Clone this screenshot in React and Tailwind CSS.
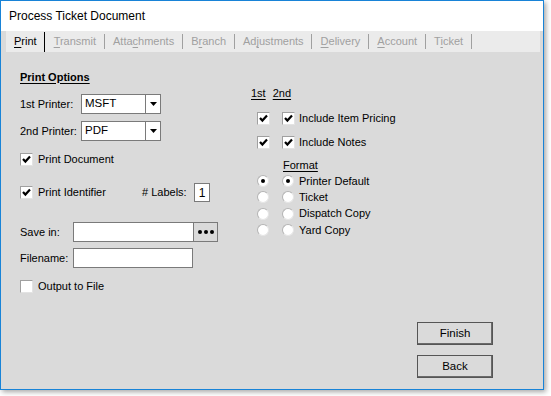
const TABS = [
  { label: 'Print', key: 'P', active: true },
  { label: 'Transmit', key: 'T' },
  { label: 'Attachments', key: 'c', idx: 4 },
  { label: 'Branch', key: 'r', idx: 1 },
  { label: 'Adjustments', key: 'j', idx: 2 },
  { label: 'Delivery', key: 'D' },
  { label: 'Account', key: 'A' },
  { label: 'Ticket', key: 'i', idx: 1 },
]

const Mnemonic = ({ text, idx = 0 }) => (
  <span>
    {text.slice(0, idx)}
    <span className="underline underline-offset-2">{text[idx]}</span>
    {text.slice(idx + 1)}
  </span>
)

const Check = ({ checked }) => (
  <div className="w-[13px] h-[13px] bg-white border-t border-l border-[#a0a0a0] border-r border-b border-r-[#e3e3e3] border-b-[#e3e3e3] flex items-center justify-center shrink-0">
    {checked && (
      <svg width="9" height="9" viewBox="0 0 9 9">
        <path d="M1 4 L3.4 6.6 L8 1.6" fill="none" stroke="#000" strokeWidth="2.2" />
      </svg>
    )}
  </div>
)

const Radio = ({ checked }) => (
  <div className="w-[12px] h-[12px] rounded-full bg-white border border-[#b4b4b4] border-r-[#e6e6e6] border-b-[#e6e6e6] flex items-center justify-center shrink-0">
    {checked && <div className="w-[4px] h-[4px] rounded-full bg-black" />}
  </div>
)

const Combo = ({ value }) => (
  <div className="w-[80px] h-[20px] bg-white border border-[#7a7a7a] flex">
    <div className="flex-1 pl-[3px] flex items-center text-[11.5px] text-black">{value}</div>
    <div className="w-[15px] border-l border-[#7a7a7a] flex items-center justify-center">
      <svg width="7" height="4" viewBox="0 0 7 4"><path d="M0 0 H7 L3.5 4 Z" fill="#000" /></svg>
    </div>
  </div>
)

const Button = ({ children }) => (
  <div className="w-[76px] h-[23px] border border-[#555] shadow-[inset_-1px_-1px_0_#6a6a6a] flex items-center justify-center text-[11.5px] text-black">
    {children}
  </div>
)

export default function App() {
  return (
    <div className="w-[551px] h-[396px] bg-white font-['Liberation_Sans',Arial,sans-serif] text-[11px] text-black leading-none">
      <div className="w-[544px] h-[390px] border border-[#1883d7] bg-[#dadada] flex flex-col shadow-[2px_2px_5px_rgba(0,0,0,0.35)]">
        {/* Title bar */}
        <div className="h-[30px] bg-white flex items-center pl-[8px] text-[12px] text-black">
          Process Ticket Document
        </div>

        {/* Tabs */}
        <div className="h-[21px] ml-[5px] mr-[3px] bg-[#ebebeb] flex items-center pl-[8px]">
          {TABS.map((t) => (
            <div key={t.label} className="flex items-center">
              <span className={t.active ? 'text-black' : 'text-[#a0a0a0]'}>
                <Mnemonic text={t.label} idx={t.idx || 0} />
              </span>
              <div className={t.active ? 'w-px h-[20px] bg-black ml-[7.5px] mr-[8.5px]' : 'w-px h-[15px] bg-[#a0a0a0] ml-[7.5px] mr-[8.5px]'} />
            </div>
          ))}
        </div>

        {/* Body */}
        <div className="flex-1 flex pl-[19px] pb-[11px]">
          {/* Left column */}
          <div className="w-[231px] flex flex-col pt-[18px]">
            <div className="h-[14px] flex items-center font-bold underline underline-offset-2">Print Options</div>

            <div className="mt-[10px] h-[20px] flex items-center">
              <span className="w-[61px]">1st Printer:</span>
              <Combo value="MSFT" />
            </div>
            <div className="mt-[7px] h-[20px] flex items-center">
              <span className="w-[61px]">2nd Printer:</span>
              <Combo value="PDF" />
            </div>

            <div className="mt-[12px] h-[13px] flex items-center gap-[5px]">
              <Check checked />
              <span>Print Document</span>
            </div>

            <div className="mt-[17px] h-[19px] flex items-center">
              <Check checked />
              <span className="ml-[5px] w-[104px]">Print Identifier</span>
              <span className="w-[52px]"># Labels:</span>
              <div className="w-[16px] h-[19px] bg-white border border-[#7a7a7a] flex items-center justify-center text-[12px]">1</div>
            </div>

            <div className="mt-[20px] h-[20px] flex items-center">
              <span className="w-[53px]">Save in:</span>
              <div className="w-[121px] h-[20px] bg-white border border-[#7a7a7a]" />
              <div className="w-[24px] h-[20px] border border-l-0 border-[#7a7a7a] flex items-center justify-center gap-[2px]">
                <div className="w-[4px] h-[4px] rounded-full bg-black" />
                <div className="w-[4px] h-[4px] rounded-full bg-black" />
                <div className="w-[4px] h-[4px] rounded-full bg-black" />
              </div>
            </div>
            <div className="mt-[6px] h-[20px] flex items-center">
              <span className="w-[53px]">Filename:</span>
              <div className="w-[120px] h-[20px] bg-white border border-[#7a7a7a]" />
            </div>

            <div className="mt-[12px] h-[13px] flex items-center gap-[5px]">
              <Check />
              <span>Output to File</span>
            </div>
          </div>

          {/* Right column */}
          <div className="w-[166px] flex flex-col pt-[34px]">
            <div className="h-[14px] flex items-center gap-[7px] underline underline-offset-2">
              <span>1st</span>
              <span>2nd</span>
            </div>
            <div className="mt-[12px] h-[13px] flex items-center pl-[6px]">
              <Check checked />
              <div className="ml-[12px]"><Check checked /></div>
              <span className="ml-[4px]">Include Item Pricing</span>
            </div>
            <div className="mt-[11px] h-[13px] flex items-center pl-[6px]">
              <Check checked />
              <div className="ml-[12px]"><Check checked /></div>
              <span className="ml-[4px]">Include Notes</span>
            </div>
            <div className="mt-[9px] h-[14px] flex items-center pl-[32px] underline underline-offset-2">Format</div>
            <div className="mt-[1px] flex flex-col">
              {['Printer Default', 'Ticket', 'Dispatch Copy', 'Yard Copy'].map((f, i) => (
                <div key={f} className="h-[16.3px] flex items-center pl-[6px]">
                  <Radio checked={i === 0} />
                  <div className="ml-[13px]"><Radio checked={i === 0} /></div>
                  <span className="ml-[5px]">{f}</span>
                </div>
              ))}
            </div>
          </div>

          {/* Buttons */}
          <div className="flex flex-col justify-end gap-[10px]">
            <Button>Finish</Button>
            <Button>Back</Button>
          </div>
        </div>
      </div>
    </div>
  )
}
